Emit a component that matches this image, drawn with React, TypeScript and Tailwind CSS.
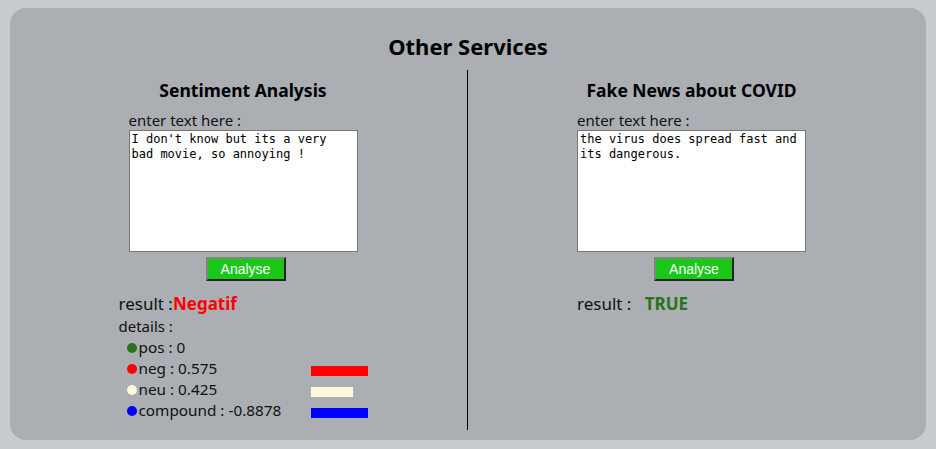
import { useState } from "react";

type Detail = { key: string; value: string; dot: string; bar?: string; barWidth?: number };

const details: Detail[] = [
  { key: "pos", value: "0", dot: "bg-[#28731a]" },
  { key: "neg", value: "0.575", dot: "bg-[#ff0000]", bar: "bg-[#ff0000]", barWidth: 57 },
  { key: "neu", value: "0.425", dot: "bg-[#fff8dc]", bar: "bg-[#fff8dc]", barWidth: 42 },
  { key: "compound", value: "-0.8878", dot: "bg-[#0000ff]", bar: "bg-[#0000ff]", barWidth: 57 },
];

function AnalyseButton() {
  return (
    <button className="mt-[5px] ml-[5px] w-[80px] h-[24px] bg-[#1ac81a] border-2 border-t-[#7a8a7a] border-l-[#7a8a7a] border-b-[#222] border-r-[#222] text-white text-[14px] font-['Liberation_Sans',Arial,sans-serif] leading-none">
      Analyse
    </button>
  );
}

function InputBox({ initial }: { initial: string }) {
  const [text, setText] = useState(initial);
  return (
    <>
      <label className="self-start text-[15px] leading-[19px] text-[#111] mt-[9px]">enter text here :</label>
      <textarea
        value={text}
        onChange={e => setText(e.target.value)}
        className="w-[229px] h-[122px] bg-white border border-[#767676] px-[2px] py-[1px] font-['DejaVu_Sans_Mono',monospace] text-[12px] leading-[15px] text-black resize-none outline-none"
      />
    </>
  );
}

export default function App() {
  return (
    <div className="min-h-[449px] bg-[#c8cbcf] pt-[8px] px-[10px] pb-[9px] font-['Noto_Sans',sans-serif]">
      <div className="h-[432px] bg-[#abaeb2] rounded-[16px] flex flex-col">
        <h1 className="pt-[23px] h-[53px] text-center text-[22px] leading-[30px] font-bold text-black">Other Services</h1>
        <div className="mt-[9px] grid grid-cols-[458px_1fr] h-[360px]">
          {/* sentiment */}
          <div className="pl-[10px] pr-[1px] border-r border-black flex flex-col items-center">
            <div className="w-[229px] flex flex-col items-center">
              <h2 className="mt-[8px] text-[17.5px] leading-[24px] font-bold text-black whitespace-nowrap">Sentiment Analysis</h2>
              <InputBox initial={"I don't know but its a very bad movie, so annoying !"} />
              <AnalyseButton />
              <div className="self-start -ml-[10px] mt-[12px] text-[17px] leading-[22px] text-[#111]">
                result :<span className="text-[#ff0000] font-bold">Negatif</span>
              </div>
              <div className="self-start -ml-[10px] text-[15px] leading-[22px] text-[#111]">details :</div>
              <div className="self-start -ml-[2px] flex flex-col">
                {details.map(d => (
                  <div key={d.key} className="flex items-center h-[21px] text-[15.3px] text-[#111]">
                    <span className={`w-[10px] h-[10px] rounded-full ${d.dot} mr-[2px]`} />
                    <span className="w-[172px]">{d.key} : {d.value}</span>
                    {d.bar && <span className={`mt-[5px] h-[10px] ${d.bar}`} style={{ width: d.barWidth }} />}
                  </div>
                ))}
              </div>
            </div>
          </div>
          {/* fake news */}
          <div className="pr-[11px] flex flex-col items-center">
            <div className="w-[229px] flex flex-col items-center">
              <h2 className="mt-[8px] text-[17.5px] leading-[24px] font-bold text-black whitespace-nowrap">Fake News about COVID</h2>
              <InputBox initial={"the virus does spread fast and its dangerous."} />
              <AnalyseButton />
              <div className="self-start mt-[12px] text-[17px] leading-[22px] text-[#111] whitespace-pre">
                {"result :   "}<span className="text-[#28731a] font-bold">TRUE</span>
              </div>
            </div>
          </div>
        </div>
      </div>
    </div>
  );
}
